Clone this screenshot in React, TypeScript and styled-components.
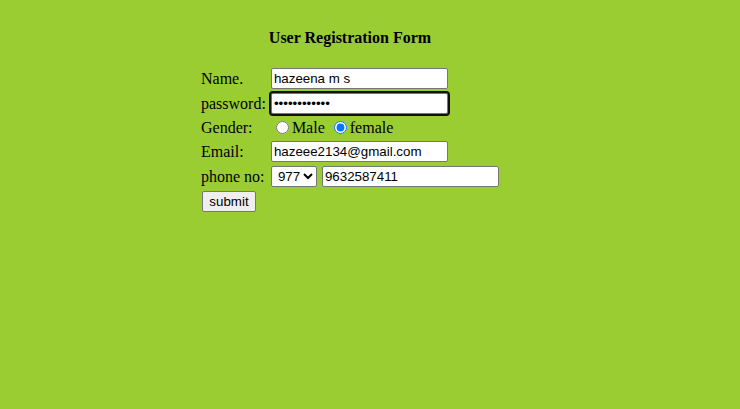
import React from 'react'
import styled, { createGlobalStyle } from 'styled-components'

const GlobalStyle = createGlobalStyle`
	html, body {
		margin: 0;
		padding: 0;
		background: #9acd32;
	}
	body {
		font-family: "Liberation Serif", "Times New Roman", serif;
		font-size: 16px;
		color: #000;
	}
`

const Page = styled.div`
	min-height: 409px;
	padding: 29px 0 0 198px;
	box-sizing: border-box;
`

const Title = styled.h3`
	margin: 0 0 18px 1px;
	width: 302px;
	font-size: 16px;
	font-weight: bold;
	text-align: center;
	line-height: 18px;
`

const Table = styled.table`
	border-spacing: 2px;
`

const Label = styled.td`
	padding: 1px 2px 1px 1px;
	white-space: nowrap;
`

const Cell = styled.td`
	padding: 1px;
	white-space: nowrap;
`

const TextInput = styled.input<{ $focused?: boolean }>`
	box-sizing: border-box;
	width: 177px;
	height: 21px;
	padding: 1px 2px;
	border: 1px solid #767676;
	border-radius: 2px;
	background: #fff;
	font-family: "Liberation Sans", Arial, sans-serif;
	font-size: 13.33px;
	color: #000;
	vertical-align: middle;
	outline: ${(p) => (p.$focused ? '2px solid #101010' : 'none')};
	outline-offset: 0;
	margin: 0;
`

const Radio = styled.input`
	width: 13px;
	height: 13px;
	margin: 3px 3px 0 5px;
	accent-color: #0075ff;
	vertical-align: -1px;
`

const Select = styled.select`
	box-sizing: border-box;
	height: 21px;
	width: 46px;
	padding: 0 0 0 2px;
	border: 1px solid #767676;
	border-radius: 2px;
	background: #fff;
	font-family: "Liberation Sans", Arial, sans-serif;
	font-size: 13.33px;
	color: #000;
	vertical-align: middle;
	margin: 0 1px 0 0;
`

const Submit = styled.button`
	font-family: "Liberation Sans", Arial, sans-serif;
	font-size: 13.33px;
	color: #000;
	padding: 1px 6px;
	height: 21px;
	width: 54px;
	border: 1px solid #767676;
	border-radius: 2px;
	background: #efefef;
	margin: 0 0 0 1px;
`

export default function App() {
	return (
		<>
			<GlobalStyle />
			<Page>
				<Title>User Registration Form</Title>
				<Table>
					<tbody>
						<tr>
							<Label>Name.</Label>
							<Cell>
								<TextInput type="text" defaultValue="hazeena m s" />
							</Cell>
						</tr>
						<tr>
							<Label>password:</Label>
							<Cell>
								<TextInput type="password" defaultValue="hazeena12345" $focused />
							</Cell>
						</tr>
						<tr>
							<Label>Gender:</Label>
							<Cell>
								<Radio type="radio" name="g" />Male{' '}
								<Radio type="radio" name="g" defaultChecked />female
							</Cell>
						</tr>
						<tr>
							<Label>Email:</Label>
							<Cell>
								<TextInput type="text" defaultValue="hazeee2134@gmail.com" />
							</Cell>
						</tr>
						<tr>
							<Label>phone no:</Label>
							<Cell>
								<Select defaultValue="977">
									<option>977</option>
									<option>91</option>
								</Select>{' '}
								<TextInput type="text" defaultValue="9632587411" />
							</Cell>
						</tr>
						<tr>
							<Label colSpan={2}>
								<Submit type="button">submit</Submit>
							</Label>
						</tr>
					</tbody>
				</Table>
			</Page>
		</>
	)
}
